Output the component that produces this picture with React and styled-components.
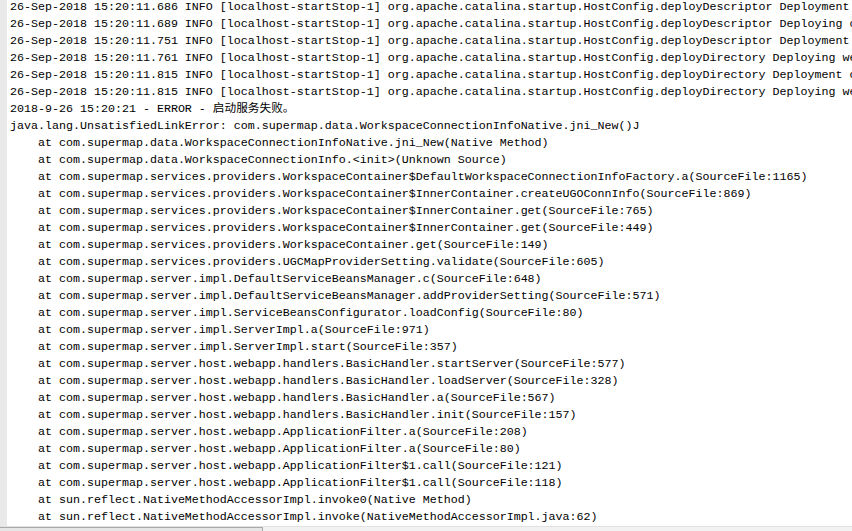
import React from "react";
import styled, { createGlobalStyle } from "styled-components";

const GlobalStyle = createGlobalStyle`
  html, body {
    margin: 0;
    padding: 0;
    background: #ffffff;
  }
`;

const Window = styled.div`
  display: flex;
  flex-direction: column;
  width: 852px;
  height: 531px;
  overflow: hidden;
  background: #ffffff;
`;

const Pane = styled.div`
  display: flex;
  flex: 1;
  min-height: 0;
`;

const Gutter = styled.div`
  width: 7px;
  flex: none;
  background: #e9e9e9;
`;

const Content = styled.div`
  flex: 1;
  min-width: 0;
  overflow: hidden;
  padding-left: 3px;
`;

const Lines = styled.div`
  margin-top: -1px;
`;

const Line = styled.div`
  height: 17px;
  line-height: 17px;
  white-space: pre;
  font-family: "Liberation Mono", "Noto Sans CJK SC", monospace;
  font-size: 11.667px;
  color: #000000;
`;

const HScroll = styled.div`
  display: flex;
  height: 4px;
  flex: none;
  border-top: 1px solid #e2e2e2;
  background: #f2f2f2;
`;

const Thumb = styled.div`
  width: 262px;
  border-top: 1px solid #a9a9a9;
  border-right: 1px solid #a9a9a9;
  background: #e6e6e6;
`;

const info = [
  ["686", "deployDescriptor Deployment of configuration descriptor"],
  ["689", "deployDescriptor Deploying configuration descriptor"],
  ["751", "deployDescriptor Deployment of configuration descriptor"],
  ["761", "deployDirectory Deploying web application directory"],
  ["815", "deployDirectory Deployment of web application directory"],
  ["815", "deployDirectory Deploying web application directory"],
];

const stack = [
  "com.supermap.data.WorkspaceConnectionInfoNative.jni_New(Native Method)",
  "com.supermap.data.WorkspaceConnectionInfo.<init>(Unknown Source)",
  "com.supermap.services.providers.WorkspaceContainer$DefaultWorkspaceConnectionInfoFactory.a(SourceFile:1165)",
  "com.supermap.services.providers.WorkspaceContainer$InnerContainer.createUGOConnInfo(SourceFile:869)",
  "com.supermap.services.providers.WorkspaceContainer$InnerContainer.get(SourceFile:765)",
  "com.supermap.services.providers.WorkspaceContainer$InnerContainer.get(SourceFile:449)",
  "com.supermap.services.providers.WorkspaceContainer.get(SourceFile:149)",
  "com.supermap.services.providers.UGCMapProviderSetting.validate(SourceFile:605)",
  "com.supermap.server.impl.DefaultServiceBeansManager.c(SourceFile:648)",
  "com.supermap.server.impl.DefaultServiceBeansManager.addProviderSetting(SourceFile:571)",
  "com.supermap.server.impl.ServiceBeansConfigurator.loadConfig(SourceFile:80)",
  "com.supermap.server.impl.ServerImpl.a(SourceFile:971)",
  "com.supermap.server.impl.ServerImpl.start(SourceFile:357)",
  "com.supermap.server.host.webapp.handlers.BasicHandler.startServer(SourceFile:577)",
  "com.supermap.server.host.webapp.handlers.BasicHandler.loadServer(SourceFile:328)",
  "com.supermap.server.host.webapp.handlers.BasicHandler.a(SourceFile:567)",
  "com.supermap.server.host.webapp.handlers.BasicHandler.init(SourceFile:157)",
  "com.supermap.server.host.webapp.ApplicationFilter.a(SourceFile:208)",
  "com.supermap.server.host.webapp.ApplicationFilter.a(SourceFile:80)",
  "com.supermap.server.host.webapp.ApplicationFilter$1.call(SourceFile:121)",
  "com.supermap.server.host.webapp.ApplicationFilter$1.call(SourceFile:118)",
  "sun.reflect.NativeMethodAccessorImpl.invoke0(Native Method)",
  "sun.reflect.NativeMethodAccessorImpl.invoke(NativeMethodAccessorImpl.java:62)",
];

const lines = [
  ...info.map(
    ([ms, rest]) =>
      `26-Sep-2018 15:20:11.${ms} INFO [localhost-startStop-1] org.apache.catalina.startup.HostConfig.${rest}`
  ),
  "2018-9-26 15:20:21 - ERROR - 启动服务失败。",
  "java.lang.UnsatisfiedLinkError: com.supermap.data.WorkspaceConnectionInfoNative.jni_New()J",
  ...stack.map((s) => `    at ${s}`),
];

const App = () => (
  <Window>
    <GlobalStyle />
    <Pane>
      <Gutter />
      <Content>
        <Lines>
          {lines.map((text, i) => (
            <Line key={i}>{text}</Line>
          ))}
        </Lines>
      </Content>
    </Pane>
    <HScroll>
      <Thumb />
    </HScroll>
  </Window>
);

export default App;
